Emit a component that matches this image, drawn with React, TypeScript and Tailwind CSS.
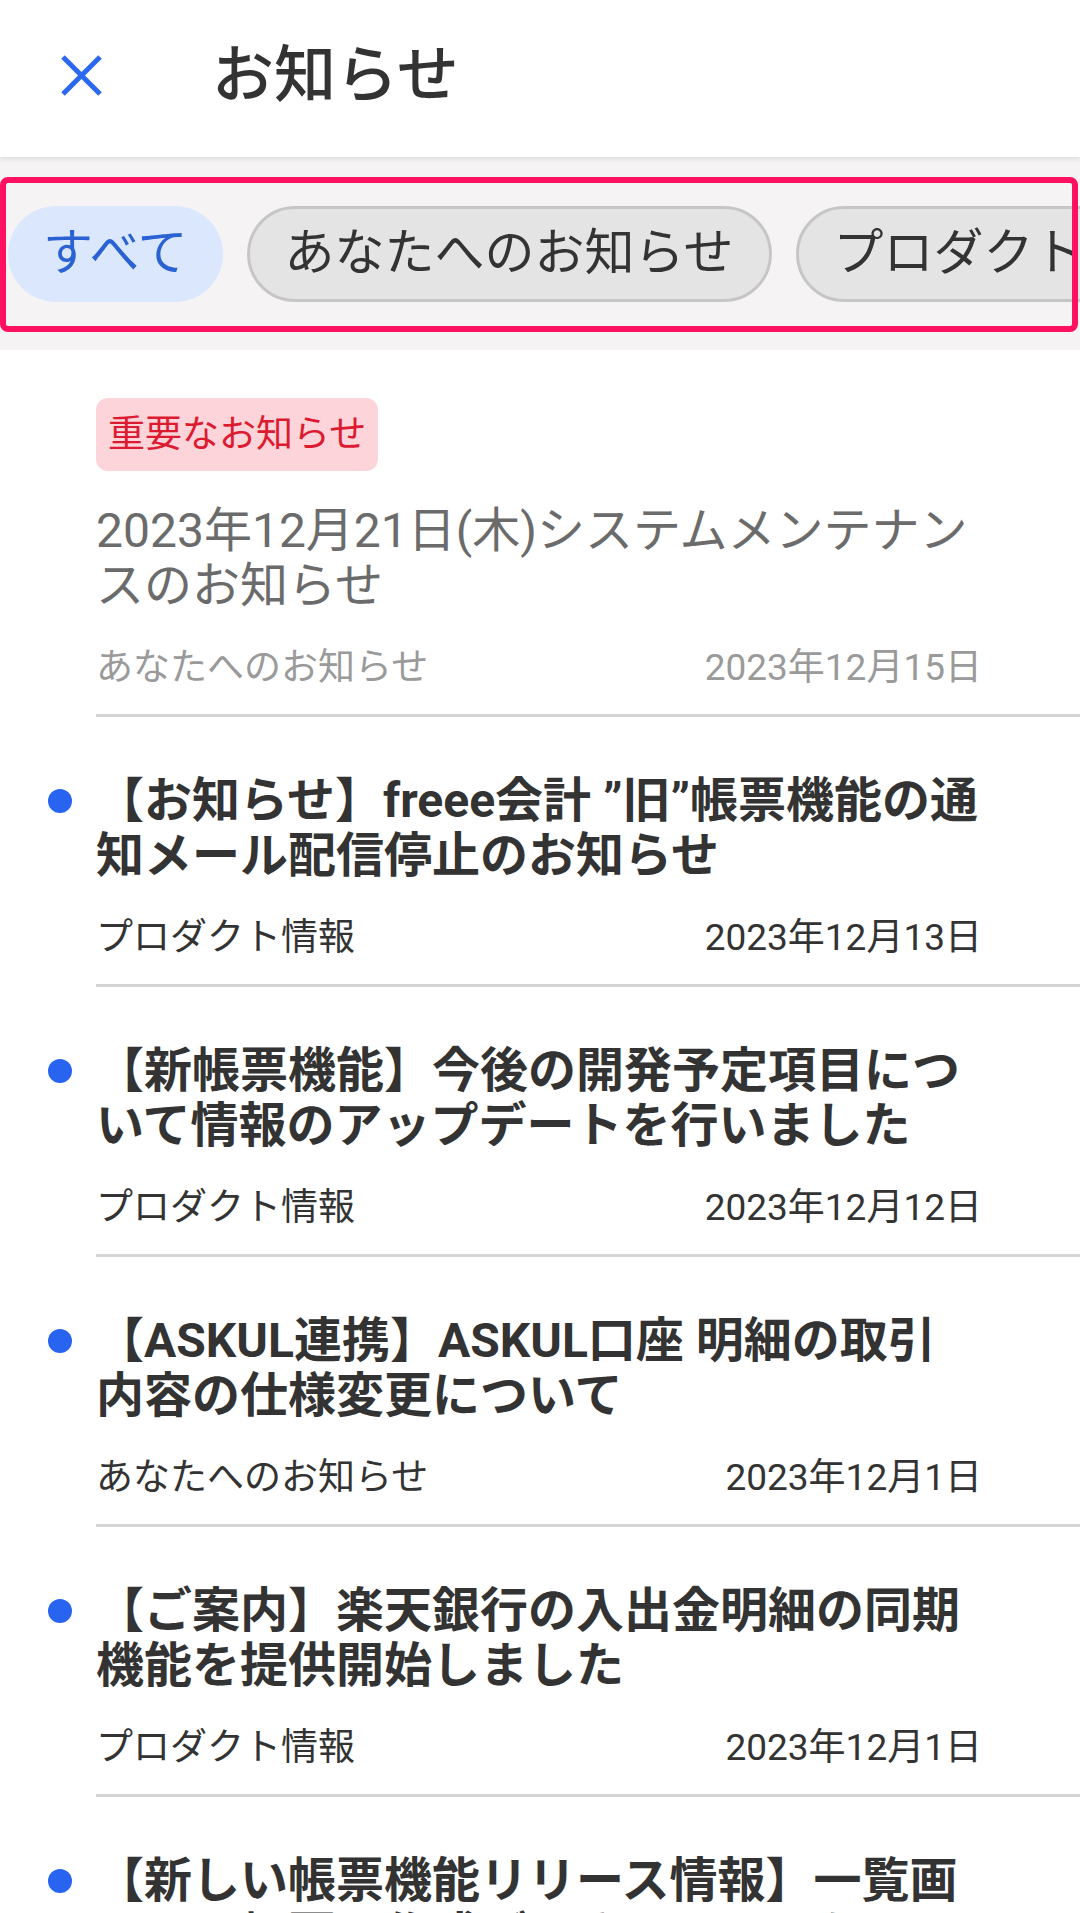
const NEWS = [
  {
    important: true,
    read: true,
    title: "2023年12月21日(木)システムメンテナンスのお知らせ",
    category: "あなたへのお知らせ",
    date: "2023年12月15日",
  },
  {
    important: false,
    read: false,
    title: "【お知らせ】freee会計 ”旧”帳票機能の通知メール配信停止のお知らせ",
    category: "プロダクト情報",
    date: "2023年12月13日",
  },
  {
    important: false,
    read: false,
    title: "【新帳票機能】今後の開発予定項目について情報のアップデートを行いました",
    category: "プロダクト情報",
    date: "2023年12月12日",
  },
  {
    important: false,
    read: false,
    title: "【ASKUL連携】ASKUL口座 明細の取引内容の仕様変更について",
    category: "あなたへのお知らせ",
    date: "2023年12月1日",
  },
  {
    important: false,
    read: false,
    title: "【ご案内】楽天銀行の入出金明細の同期機能を提供開始しました",
    category: "プロダクト情報",
    date: "2023年12月1日",
  },
  {
    important: false,
    read: false,
    title: "【新しい帳票機能リリース情報】一覧画面から帳票の作成ができるようになりました",
    category: "プロダクト情報",
    date: "2023年11月30日",
  },
];

const FILTERS = ["すべて", "あなたへのお知らせ", "プロダクト情報"];

function NewsItem({ item }: { item: (typeof NEWS)[number] }) {
  const top = item.important ? "pt-[48px]" : "pt-[56px]";
  return (
    <div className="flex">
      <div className={`w-[96px] shrink-0 ${top}`}>
        {!item.read && (
          <div className="ml-[48px] mt-[16px] h-[24px] w-[24px] rounded-full bg-[#2864f0]" />
        )}
      </div>
      <div className={`flex-1 border-b-[3px] border-[#d4d4d4] pr-[98px] pb-[25px] ${top}`}>
        {item.important && (
          <div className="mb-[32px] inline-flex h-[73px] items-center rounded-[12px] bg-[#fcd4d9] px-[12px] text-[37px] text-[#dc1a30]">
            重要なお知らせ
          </div>
        )}
        <p
          className={`text-[48px] leading-[55px] ${
            item.read ? "text-[#6b6b6b]" : "font-bold text-[#333333]"
          }`}
        >
          {item.title}
        </p>
        <div
          className={`mt-[34px] flex justify-between text-[37px] leading-[42px] ${
            item.read ? "text-[#9a9a9a]" : "text-[#333333]"
          }`}
        >
          <span>{item.category}</span>
          <span>{item.date}</span>
        </div>
      </div>
    </div>
  );
}

export default function App() {
  return (
    <div className="min-h-screen bg-white font-[Roboto,'Noto_Sans_CJK_JP',sans-serif] text-[#333333]">
      {/* Header */}
      <header className="relative z-10 flex h-[157px] items-center bg-white pb-[6px] shadow-[0_2px_5px_rgba(0,0,0,0.10)]">
        <svg
          className="ml-[61px] h-[41px] w-[41px] shrink-0"
          viewBox="0 0 41 41"
          fill="none"
          stroke="#2b68f0"
          strokeWidth="5"
        >
          <line x1="2" y1="2" x2="39" y2="39" />
          <line x1="39" y1="2" x2="2" y2="39" />
        </svg>
        <h1 className="ml-[110px] text-[62px] font-medium text-[#333333]">お知らせ</h1>
      </header>

      {/* Filter chips */}
      <div className="relative h-[193px] overflow-hidden bg-[#f5f3f4]">
        <div className="flex h-full items-center gap-6 pl-2">
          {FILTERS.map((f, i) => (
            <div
              key={f}
              className={
                i === 0
                  ? "flex h-[96px] shrink-0 items-center whitespace-nowrap rounded-full bg-[#dbe7fd] px-[35px] text-[50px] text-[#2a62d4]"
                  : "flex h-[96px] shrink-0 items-center whitespace-nowrap rounded-full border-[3px] border-[#c6c6c6] bg-[#e4e4e4] px-[35px] text-[50px] text-[#333333]"
              }
            >
              {f}
            </div>
          ))}
        </div>
        <div className="absolute left-0 right-[2px] top-[20px] h-[155px] rounded-[8px] border-[6px] border-[#ff1060]" />
      </div>

      {/* List */}
      <div>
        {NEWS.map((n) => (
          <NewsItem key={n.title} item={n} />
        ))}
      </div>
    </div>
  );
}
